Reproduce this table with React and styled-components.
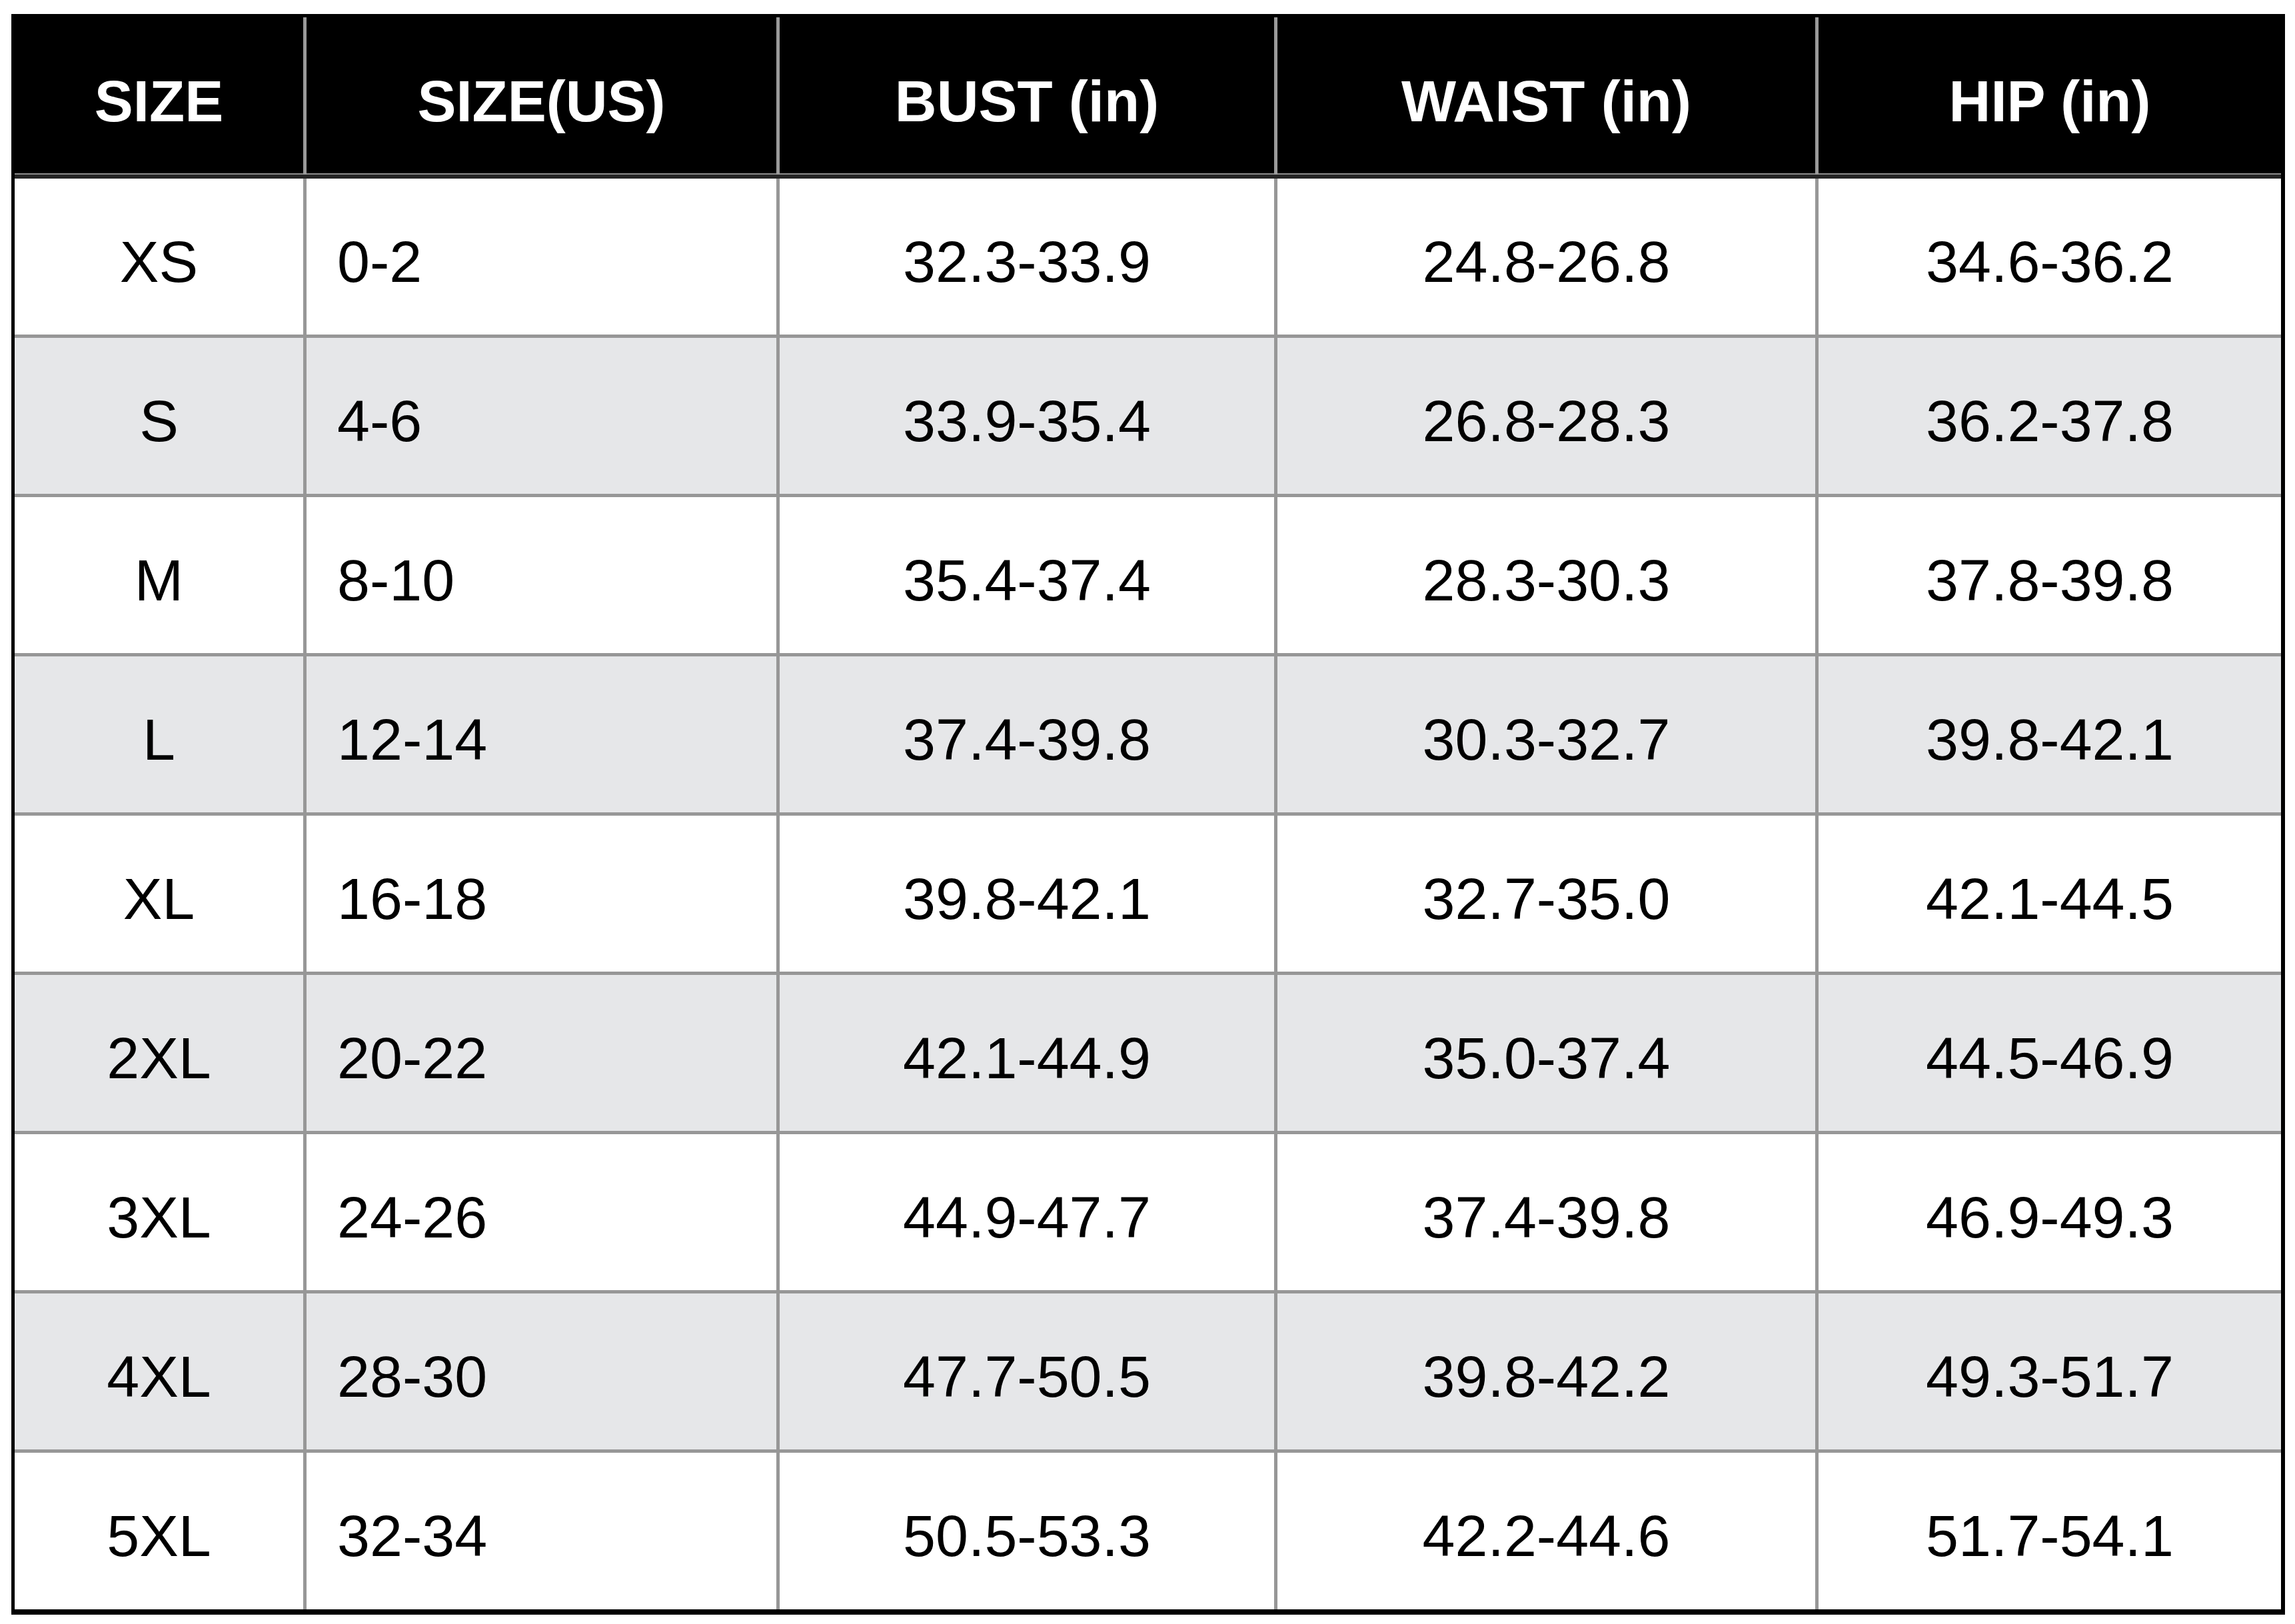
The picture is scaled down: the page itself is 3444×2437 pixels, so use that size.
import React from 'react'
import styled, { createGlobalStyle } from 'styled-components'

const COLUMNS = '438px 710px 747px 812px 694px'

const sizes = [
  ['XS', '0-2', '32.3-33.9', '24.8-26.8', '34.6-36.2'],
  ['S', '4-6', '33.9-35.4', '26.8-28.3', '36.2-37.8'],
  ['M', '8-10', '35.4-37.4', '28.3-30.3', '37.8-39.8'],
  ['L', '12-14', '37.4-39.8', '30.3-32.7', '39.8-42.1'],
  ['XL', '16-18', '39.8-42.1', '32.7-35.0', '42.1-44.5'],
  ['2XL', '20-22', '42.1-44.9', '35.0-37.4', '44.5-46.9'],
  ['3XL', '24-26', '44.9-47.7', '37.4-39.8', '46.9-49.3'],
  ['4XL', '28-30', '47.7-50.5', '39.8-42.2', '49.3-51.7'],
  ['5XL', '32-34', '50.5-53.3', '42.2-44.6', '51.7-54.1'],
]

const headings = ['SIZE', 'SIZE(US)', 'BUST (in)', 'WAIST (in)', 'HIP (in)']

const GlobalStyle = createGlobalStyle`
  html, body {
    margin: 0;
    padding: 0;
    background: #fff;
  }
  body {
    font-family: "Liberation Sans", Arial, sans-serif;
  }
`

const Sheet = styled.div`
  box-sizing: border-box;
  width: 3412px;
  margin: 21px 0 0 17px;
  border: 5px solid #000;
  border-right-width: 6px;
  border-bottom-width: 8px;
  display: flex;
  flex-direction: column;
`

const HeaderRow = styled.div`
  box-sizing: border-box;
  display: grid;
  grid-template-columns: ${COLUMNS};
  height: 242px;
  background: #000;
  border-bottom: 6px solid #242424;
  box-shadow: inset 0 -2px 0 #8c8c8c;
`

const Row = styled.div`
  box-sizing: border-box;
  display: grid;
  grid-template-columns: ${COLUMNS};
  height: ${p => (p.$last ? '235px' : '239px')};
  background: ${p => (p.$shaded ? '#e6e7e9' : '#fff')};
  border-bottom: ${p => (p.$last ? 'none' : '5px solid #979797')};
`

const HeadCell = styled.div`
  display: flex;
  align-items: center;
  justify-content: center;
  padding-top: 15px;
  border-right: 5px solid #9a9a9a;
  color: #fff;
  font-size: 87px;
  font-weight: 700;
  white-space: nowrap;

  &:last-child {
    border-right: none;
  }
`

const Cell = styled.div`
  display: flex;
  align-items: center;
  justify-content: ${p => (p.$left ? 'flex-start' : 'center')};
  padding-top: 15px;
  padding-left: ${p => (p.$left ? '46px' : '0')};
  border-right: 5px solid #979797;
  color: #000;
  font-size: 88px;
  white-space: nowrap;

  &:last-child {
    border-right: none;
  }
`

function App() {
  return (
    <>
      <GlobalStyle />
      <Sheet>
        <HeaderRow>
          {headings.map(h => (
            <HeadCell key={h}>{h}</HeadCell>
          ))}
        </HeaderRow>
        {sizes.map((row, i) => (
          <Row key={row[0]} $shaded={i % 2 === 1} $last={i === sizes.length - 1}>
            {row.map((value, j) => (
              <Cell key={j} $left={j === 1}>{value}</Cell>
            ))}
          </Row>
        ))}
      </Sheet>
    </>
  )
}

export default App
